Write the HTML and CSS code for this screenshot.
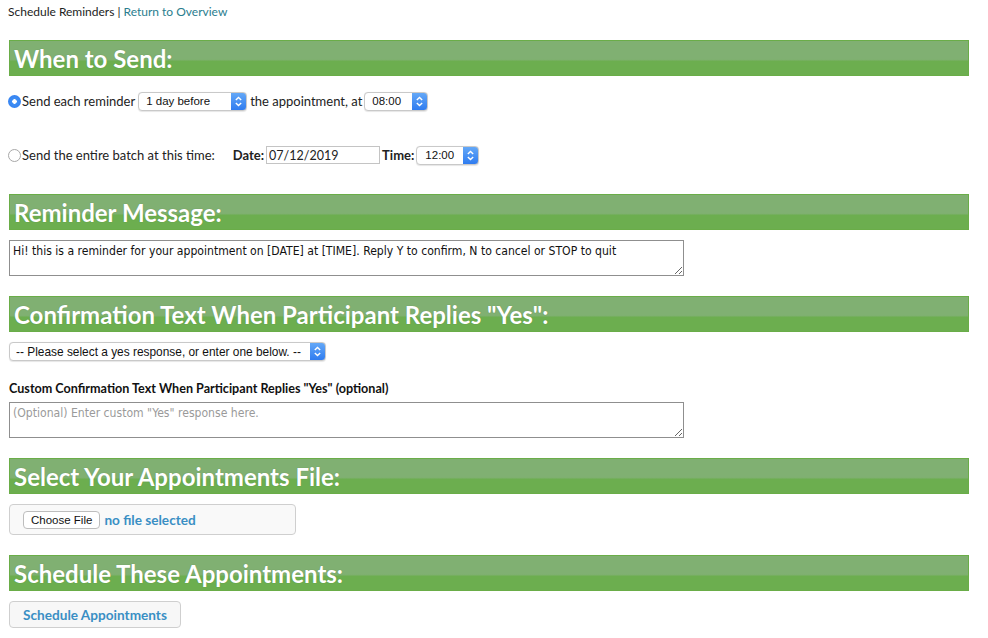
FILE: index.html
```html
<!DOCTYPE html>
<html>
<head>
<meta charset="utf-8">
<link rel="stylesheet" href="styles.css">
</head>
<body>
<div class="page">
  <div class="crumbs">Schedule Reminders | <a class="link" href="#">Return to Overview</a></div>

  <h2 class="bar">When to Send:</h2>
  <div class="row row1">
    <input type="radio" class="radio" name="when" checked>
    <span class="lbl">Send each reminder</span>
    <select class="sel sel-days"><option>1 day before</option></select>
    <span class="lbl">the appointment, at</span>
    <select class="sel sel-time"><option>08:00</option></select>
  </div>
  <div class="row row2">
    <input type="radio" class="radio" name="when">
    <span class="lbl batch">Send the entire batch at this time:</span>
    <b class="blbl">Date:</b>
    <input type="text" class="date" value="07/12/2019">
    <b class="blbl">Time:</b>
    <select class="sel sel-time2"><option>12:00</option></select>
  </div>

  <h2 class="bar bar-after-rows">Reminder Message:</h2>
  <textarea class="ta">Hi! this is a reminder for your appointment on [DATE] at [TIME]. Reply Y to confirm, N to cancel or STOP to quit</textarea>

  <h2 class="bar">Confirmation Text When Participant Replies "Yes":</h2>
  <select class="sel sel-yes"><option>-- Please select a yes response, or enter one below. --</option></select>
  <div class="small-lbl">Custom Confirmation Text When Participant Replies "Yes" (optional)</div>
  <textarea class="ta ta2" placeholder="(Optional) Enter custom &quot;Yes&quot; response here."></textarea>

  <h2 class="bar">Select Your Appointments File:</h2>
  <div class="filebox"><span class="fbtn">Choose File</span><span class="fname">no file selected</span></div>

  <h2 class="bar">Schedule These Appointments:</h2>
  <button class="go">Schedule Appointments</button>
</div>
</body>
</html>
```

FILE: styles.css
```css
* { box-sizing: border-box; }
html, body { margin: 0; padding: 0; background: #fff; }
body { font-family: Lato, "Open Sans", sans-serif; color: #222; font-size: 13px; }
.page { padding: 4px 19px 0 9px; width: 988px; }
.crumbs { font-size: 12px; line-height: 16px; margin-left: -1px; }
.link { color: #2a7d8e; text-decoration: none; }

.bar {
  margin: 20px 0 0 0;
  height: 36px;
  padding: 0 0 0 4px;
  color: #fff;
  font: 700 24px/36px Lato, sans-serif;
  border: 1px solid #6aad48;
  background:
    linear-gradient(to bottom, #80b072 0, #80b072 54%, #6cae4f 60%, #6cae4f 100%);
  text-shadow: 0 0 1px rgba(40,80,30,0.35);
}
.bar-after-rows { margin-top: 29px; }

.row { display: flex; align-items: center; height: 20px; margin-left: -1px; }
.row1 { margin-top: 15px; }
.row2 { margin-top: 34px; }
.radio {
  appearance: none; -webkit-appearance: none;
  width: 13px; height: 13px; margin: 0 1px 0 0; border-radius: 50%;
  border: 1px solid #a8a8a8; background: #fff;
}
.radio:checked {
  border: none;
  background: radial-gradient(circle, #fff 0, #fff 2px, #3f8ef4 2.5px, #2f7cf0 100%);
}
.lbl { font-size: 13px; color: #222; }
.batch { margin-right: 18px; }
.blbl { font-size: 13px; font-weight: 700; color: #222; margin-right: 2px; }

.sel {
  appearance: none; -webkit-appearance: none;
  height: 19px;
  border: 1px solid #c9c9c9;
  border-radius: 4px;
  font: 11.5px "Liberation Sans", Arial, sans-serif;
  color: #111;
  padding: 0 18px 0 7px;
  background-color: #fff;
  background-image:
    url("data:image/svg+xml,%3Csvg xmlns='http://www.w3.org/2000/svg' width='14' height='17'%3E%3Cpath d='M4.5 7 L7 4.5 L9.5 7 M4.5 10 L7 12.5 L9.5 10' fill='none' stroke='white' stroke-width='1.3'/%3E%3C/svg%3E"),
    linear-gradient(to bottom, #64a8f7, #2f7cf0);
  background-repeat: no-repeat, no-repeat;
  background-position: right 0 center, right 0 top;
  background-size: 15px 17px, 15px 100%;
  box-shadow: 0 0.5px 1px rgba(0,0,0,0.1);
}
.sel-days { width: 109px; margin: 0 3px; }
.sel-time { width: 64px; margin-left: 2px; }
.sel-time2 { width: 63px; padding-left: 8px; }
.sel-yes { display: block; width: 317px; margin-top: 10px; padding-left: 6px; font-size: 11.9px; }

.date {
  width: 114px; height: 18px; border: 1px solid #c4c4c4; margin: 0 2px 0 0;
  font: 12.5px Lato, sans-serif; color: #222; padding: 0 2px;
}

.ta {
  display: block; width: 675px; height: 36px; margin-top: 10px;
  border: 1px solid #8f8f8f; padding: 3px 3px;
  font: 12.1px "DejaVu Sans Condensed", "DejaVu Sans", sans-serif; color: #111;
  resize: vertical;
}
.ta2 { margin-top: 6px; }
.ta2::placeholder { color: #9a9a9a; }
.small-lbl { font: 700 12.6px/14px Lato, sans-serif; color: #111; margin-top: 21px; }

.filebox {
  margin-top: 10px; width: 287px; height: 31px; border: 1px solid #cfcfcf; border-radius: 4px;
  background: #f9f9f9; display: flex; align-items: center; padding-left: 13px;
}
.fbtn {
  font: 11.5px "Liberation Sans", Arial, sans-serif; color: #111; background: #fff;
  border: 1px solid #bdbdbd; border-radius: 4px; padding: 1px 7px; height: 18px; line-height: 15px;
}
.fname { color: #3a8fc4; font: 700 13.6px Lato, sans-serif; margin-left: 4px; }

.go {
  display: block; margin-top: 10px; width: 172px; height: 27px; border: 1px solid #cfcfcf; border-radius: 4px;
  background: #f7f7f7; color: #3a8fc4; font: 700 13.6px Lato, sans-serif; padding: 0;
}
```
